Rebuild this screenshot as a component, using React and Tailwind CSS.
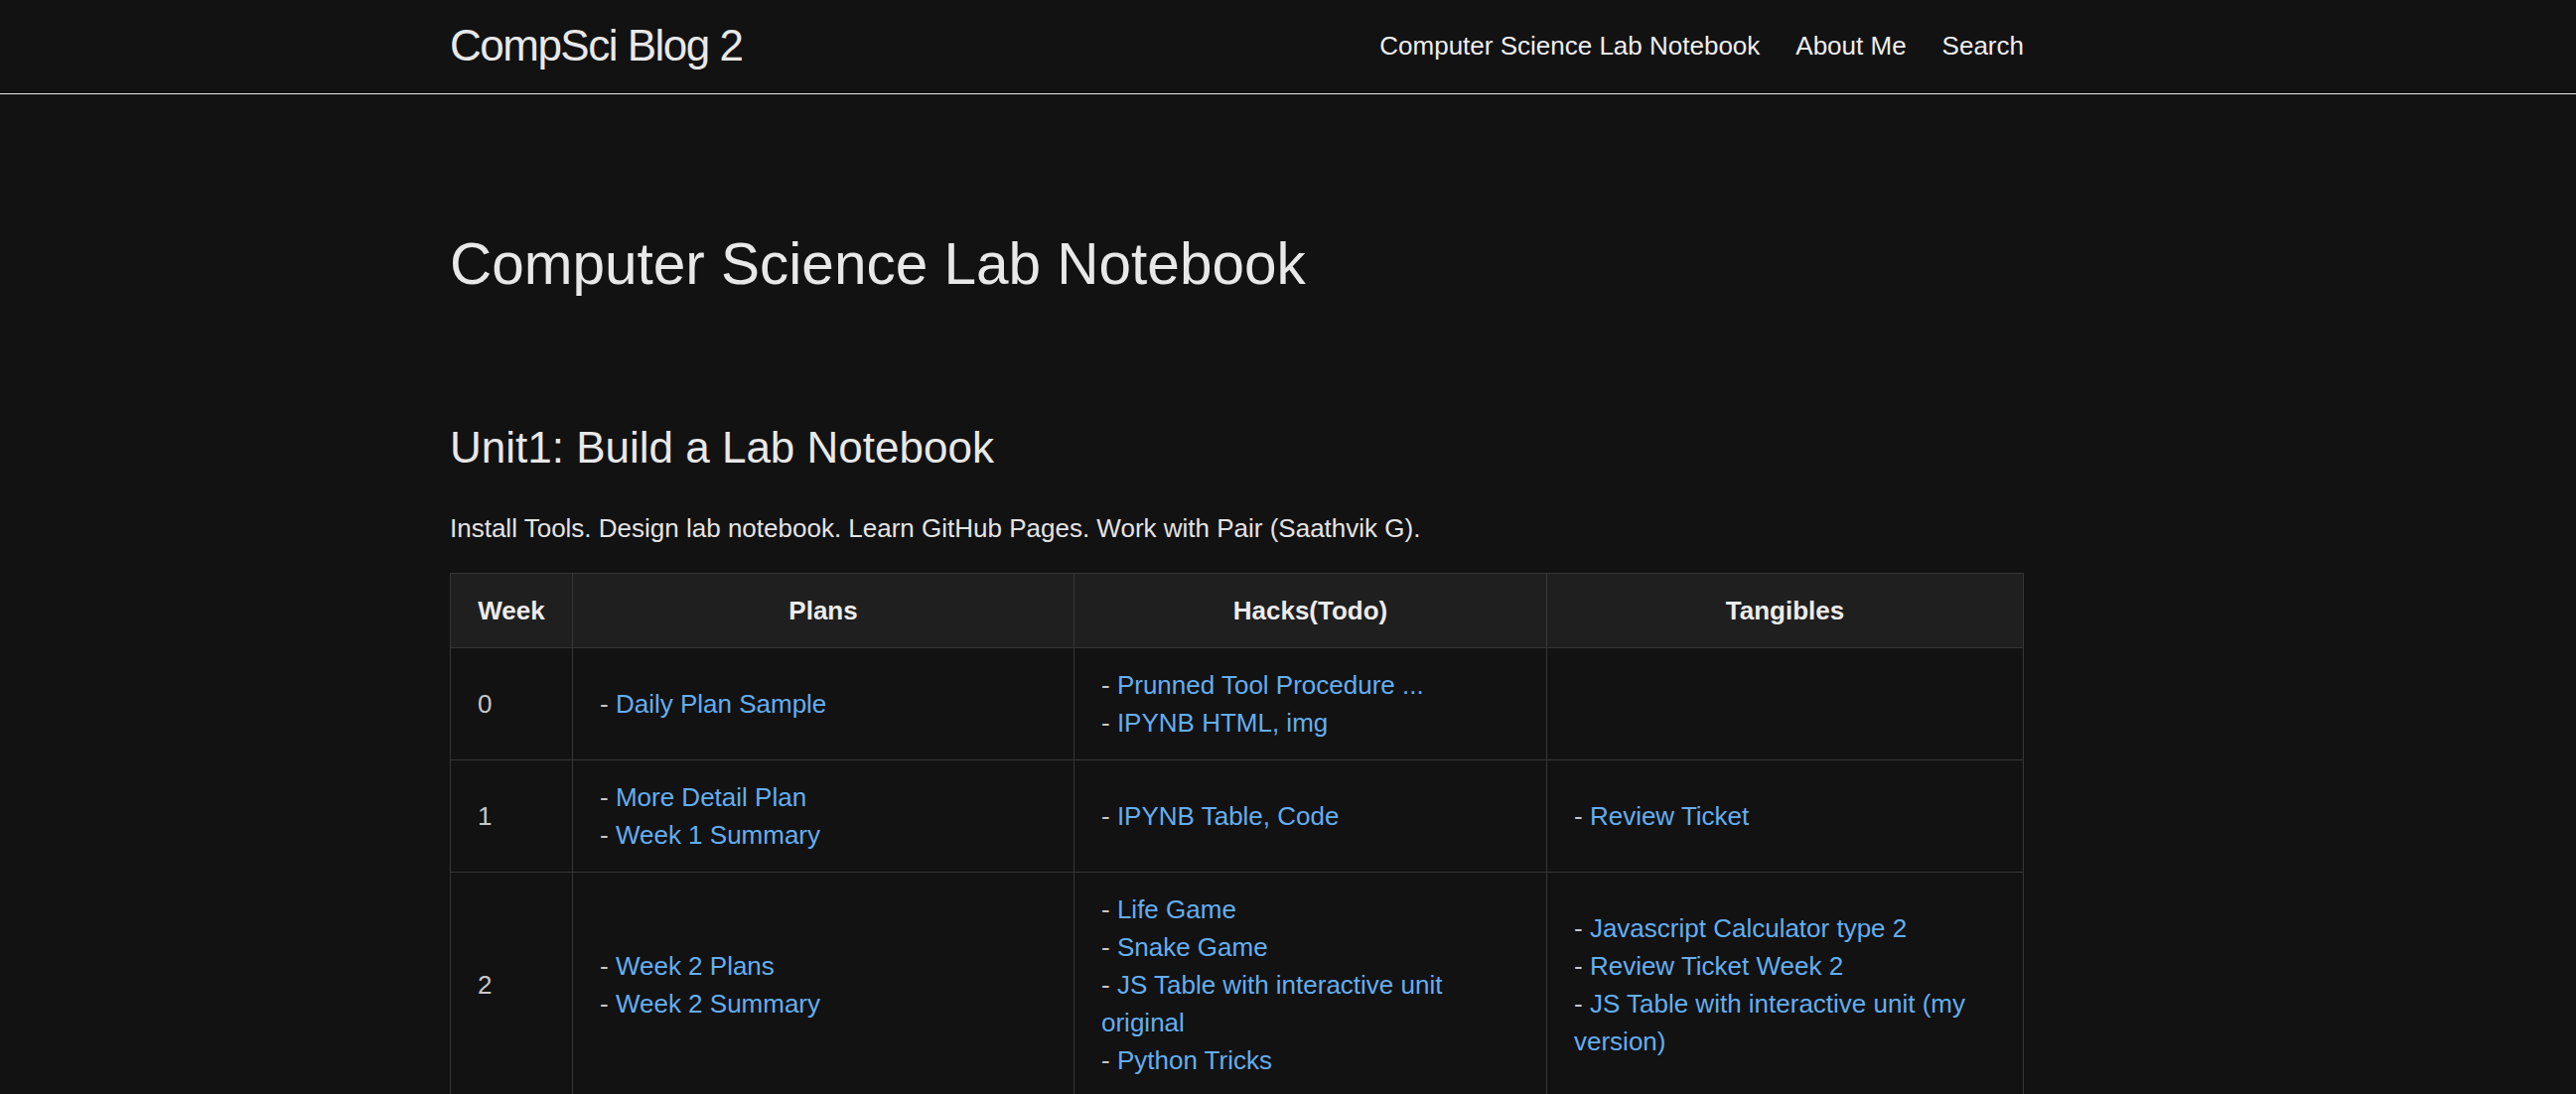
import React from "react";

const navLinks = ["Computer Science Lab Notebook", "About Me", "Search"];

const rows = [
  {
    week: "0",
    plans: [["Daily Plan Sample"]],
    hacks: [["Prunned Tool Procedure ..."], ["IPYNB HTML, img"]],
    tangibles: [],
  },
  {
    week: "1",
    plans: [["More Detail Plan"], ["Week 1 Summary"]],
    hacks: [["IPYNB Table, Code"]],
    tangibles: [["Review Ticket"]],
  },
  {
    week: "2",
    plans: [["Week 2 Plans"], ["Week 2 Summary"]],
    hacks: [
      ["Life Game"],
      ["Snake Game"],
      ["JS Table with interactive unit original"],
      ["Python Tricks"],
    ],
    tangibles: [
      ["Javascript Calculator type 2"],
      ["Review Ticket Week 2"],
      ["JS Table with interactive unit (my version)"],
    ],
  },
];

// one "- link" line per item, stacked like <br> separated markdown
const LinkList = ({ items }) => (
  <>
    {items.map(([label], i) => (
      <div key={i}>
        <span className="text-[#c8c8c8]">- </span>
        <a href="#" className="text-[#64aef0]">
          {label}
        </a>
      </div>
    ))}
  </>
);

export default function App() {
  return (
    <div
      className="min-h-screen bg-[#121212] text-[#e4e4e4]"
      style={{ fontFamily: '"Liberation Sans", Arial, sans-serif' }}
    >
      {/* Site header */}
      <header className="h-[95px] border-b border-[#e6e6e6]">
        <div className="ml-[453px] w-[1585px] h-full flex items-center justify-between">
          <a href="#" className="text-[44px] tracking-[-1.5px] text-[#e8e8e8] font-light leading-none -mt-[2px]">
            CompSci Blog 2
          </a>
          <nav className="flex items-center gap-[36px] text-[26px] text-[#eeeeee] -mt-[2px]">
            {navLinks.map((l) => (
              <a key={l} href="#">
                {l}
              </a>
            ))}
          </nav>
        </div>
      </header>

      {/* Page content */}
      <main className="ml-[453px] w-[1585px]">
        <h1 className="pt-[131px] text-[58.5px] leading-[80px] text-[#e8e8e8]">
          Computer Science Lab Notebook
        </h1>

        <h2 className="mt-[115px] text-[44px] leading-[60px] text-[#e8e8e8]">
          Unit1: Build a Lab Notebook
        </h2>

        <p className="mt-[32px] text-[26px] leading-[38px] text-[#e4e4e4]">
          Install Tools. Design lab notebook. Learn GitHub Pages. Work with Pair (Saathvik G).
        </p>

        <table className="mt-[26px] w-[1584px] border-collapse text-[26px] leading-[38px] table-fixed">
          <colgroup>
            <col className="w-[123px]" />
            <col className="w-[505px]" />
            <col className="w-[476px]" />
            <col className="w-[480px]" />
          </colgroup>
          <thead>
            <tr className="bg-[#1f1f1f]">
              {["Week", "Plans", "Hacks(Todo)", "Tangibles"].map((h) => (
                <th
                  key={h}
                  className="border border-[#363636] px-[27px] py-[18px] font-bold text-center text-[#ececec]"
                >
                  {h}
                </th>
              ))}
            </tr>
          </thead>
          <tbody>
            {rows.map((r) => (
              <tr key={r.week}>
                <td className="border border-[#363636] px-[27px] py-[18px] text-[#c8c8c8] align-middle">
                  {r.week}
                </td>
                <td className="border border-[#363636] px-[27px] py-[18px] align-middle">
                  <LinkList items={r.plans} />
                </td>
                <td className="border border-[#363636] px-[27px] py-[18px] align-middle">
                  <LinkList items={r.hacks} />
                </td>
                <td className="border border-[#363636] px-[27px] py-[18px] align-middle">
                  <LinkList items={r.tangibles} />
                </td>
              </tr>
            ))}
          </tbody>
        </table>
      </main>
    </div>
  );
}
